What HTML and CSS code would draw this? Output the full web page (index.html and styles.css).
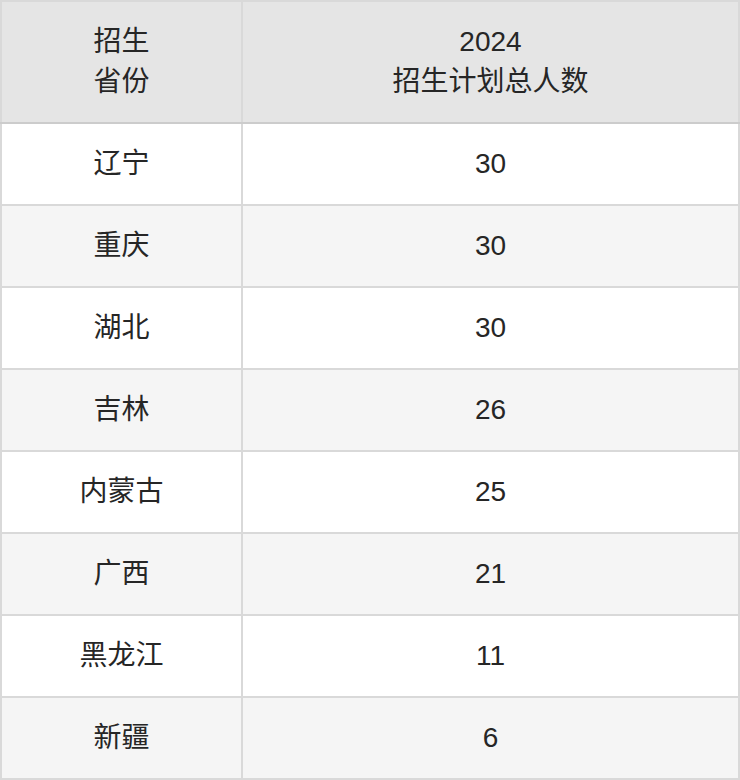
FILE: index.html
```html
<!DOCTYPE html>
<html lang="zh">
<head>
<meta charset="utf-8">
<link rel="stylesheet" href="styles.css">
</head>
<body>
<table class="plan">
  <colgroup><col class="c1"><col class="c2"></colgroup>
  <thead>
    <tr><th>招生<br>省份</th><th>2024<br>招生计划总人数</th></tr>
  </thead>
  <tbody>
    <tr><td>辽宁</td><td>30</td></tr>
    <tr><td>重庆</td><td>30</td></tr>
    <tr><td>湖北</td><td>30</td></tr>
    <tr><td>吉林</td><td>26</td></tr>
    <tr><td>内蒙古</td><td>25</td></tr>
    <tr><td>广西</td><td>21</td></tr>
    <tr><td>黑龙江</td><td>11</td></tr>
    <tr><td>新疆</td><td>6</td></tr>
  </tbody>
</table>
</body>
</html>
```
FILE: styles.css
```css
html, body {
  margin: 0;
  padding: 0;
  background: #fff;
}
.plan {
  width: 740px;
  border-collapse: collapse;
  table-layout: fixed;
  font-family: "Liberation Sans", "Noto Sans CJK SC", sans-serif;
  font-size: 28px;
  color: #262626;
}
.plan .c1 { width: 241px; }
.plan th, .plan td {
  border: 2px solid #d9d9d9;
  text-align: center;
  vertical-align: middle;
  padding: 0;
}
.plan th {
  background: #e5e5e5;
  font-weight: normal;
  height: 120px;
  line-height: 40px;
  border-bottom-color: #cccccc;
}
.plan td {
  height: 80px;
  line-height: 30px;
}
.plan tbody tr:nth-child(even) td { background: #f5f5f5; }
.plan tbody tr:nth-child(odd) td { background: #fff; }
```
